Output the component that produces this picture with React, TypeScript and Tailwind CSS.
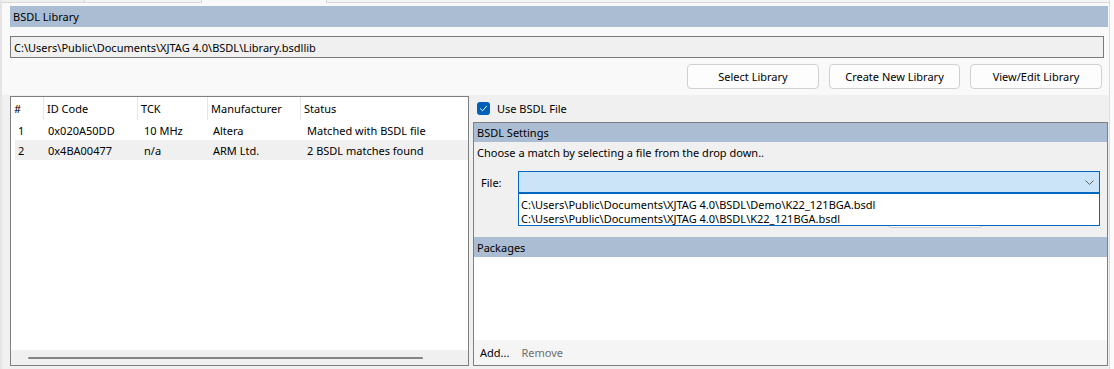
import React from "react";

interface Device {
  index: number;
  idCode: string;
  tck: string;
  manufacturer: string;
  status: string;
}

const devices: Device[] = [
  { index: 1, idCode: "0x020A50DD", tck: "10 MHz", manufacturer: "Altera", status: "Matched with BSDL file" },
  { index: 2, idCode: "0x4BA00477", tck: "n/a", manufacturer: "ARM Ltd.", status: "2 BSDL matches found" },
];

const bsdlFiles = [
  "C:\\Users\\Public\\Documents\\XJTAG 4.0\\BSDL\\Demo\\K22_121BGA.bsdl",
  "C:\\Users\\Public\\Documents\\XJTAG 4.0\\BSDL\\K22_121BGA.bsdl",
];

const Button: React.FC<{ label: string; width: string }> = ({ label, width }) => (
  <button
    className={`${width} h-[25px] rounded-[4px] border border-[#d0d0d0] bg-[#fdfdfd] text-center text-[11px] text-black`}
  >
    {label}
  </button>
);

const App: React.FC = () => {
  return (
    <div className="w-[1114px] h-[369px] overflow-hidden bg-[#fbfbfb] font-['Noto_Sans',sans-serif] text-[11px] leading-none text-black">
      <div className="w-[1111px] h-full flex flex-col border-r border-[#dcdcdc] border-l-[3px] border-l-[#e4e4e4] -ml-[1px]">
        {/* Tab strip remnants */}
        <div className="h-[3px] flex shrink-0">
          <div className="w-[83px] bg-[#f0f0f0] border-r border-b border-[#d9d9d9]" />
          <div className="w-[117px] bg-[#f5f5f5] border-r border-b border-[#d9d9d9]" />
          <div className="w-[125px] bg-[#f9f9f9] border-r border-[#d9d9d9]" />
          <div className="flex-1 bg-[#f5f5f5] border-b border-[#d9d9d9]" />
        </div>

        {/* Library section */}
        <div className="h-[92px] shrink-0 bg-[#f9f9f9] pl-[8px] pt-[3px]">
          <div className="h-[21px] mr-[1px] bg-[#abbdd3] pl-[3px] flex items-center">BSDL Library</div>
          <div className="mt-[9px] h-[22px] mr-[5px] border border-[#7a7a7a] bg-[#f0f0f0] pl-[3px] flex items-center">
            C:\Users\Public\Documents\XJTAG 4.0\BSDL\Library.bsdllib
          </div>
          <div className="mt-[6px] mr-[7px] flex justify-end gap-[10px]">
            <Button label="Select Library" width="w-[132px]" />
            <Button label="Create New Library" width="w-[131px]" />
            <Button label="View/Edit Library" width="w-[132px]" />
          </div>
        </div>

        {/* Devices + BSDL settings */}
        <div className="flex-1 bg-[#f0f0f0] pl-[8px] pt-[1px] flex gap-[4px]">
          {/* Device list */}
          <div className="w-[459px] h-[270px] border border-[#7f7f7f] bg-white flex flex-col">
            <div className="h-[23px] flex">
              <div className="w-[33px] border-r border-[#e5e5e5] pl-[3px] pt-[6px]">#</div>
              <div className="w-[94px] border-r border-[#e5e5e5] pl-[3px] pt-[6px]">ID Code</div>
              <div className="w-[70px] border-r border-[#e5e5e5] pl-[3px] pt-[6px]">TCK</div>
              <div className="w-[93px] border-r border-[#e5e5e5] pl-[3px] pt-[6px]">Manufacturer</div>
              <div className="flex-1 pl-[3px] pt-[6px]">Status</div>
            </div>
            {devices.map((d) => (
              <div
                key={d.index}
                className={`ml-[4px] h-[20px] flex items-center ${d.index === 2 ? "bg-[#f0f0f0]" : ""}`}
              >
                <div className="w-[29px] pl-[3px]">{d.index}</div>
                <div className="w-[94px] pl-[4px]">{d.idCode}</div>
                <div className="w-[70px] pl-[6px]">{d.tck}</div>
                <div className="w-[93px] pl-[5px]">{d.manufacturer}</div>
                <div className="flex-1 pl-[6px]">{d.status}</div>
              </div>
            ))}
            <div className="flex-1" />
            <div className="h-[15px] bg-[#f0f0f0] flex items-center pl-[17px]">
              <div className="w-[395px] h-[2px] rounded-full bg-[#858585]" />
            </div>
          </div>

          {/* BSDL options */}
          <div className="w-[635px] flex flex-col">
            <div className="h-[26px] flex items-center pl-[4px] pb-[1px]">
              <div className="w-[13px] h-[13px] rounded-[3px] bg-[#005fb8] flex items-center justify-center">
                <svg width="9" height="9" viewBox="0 0 9 9" fill="none">
                  <path d="M1.5 4.8 L3.6 6.8 L7.6 2.2" stroke="white" strokeWidth="1" strokeLinecap="round" strokeLinejoin="round" />
                </svg>
              </div>
              <span className="ml-[7px]">Use BSDL File</span>
            </div>

            <div className="h-[244px] border border-[#7f7f7f] flex flex-col">
              <div className="h-[19px] shrink-0 bg-[#abbdd3] pl-[3px] flex items-center">BSDL Settings</div>
              <div className="h-[95px] shrink-0 relative">
                <div className="h-[20px] pl-[3px] flex items-center">
                  Choose a match by selecting a file from the drop down..
                </div>
                <div className="mt-[9px] flex items-center">
                  <span className="w-[44px] pl-[7px]">File:</span>
                  <div className="w-[582px] h-[22px] border border-[#0067c0] bg-[#cce4f7] flex items-center justify-end pr-[5px]">
                    <svg width="9" height="5" viewBox="0 0 9 5" fill="none">
                      <path d="M0.5 0.5 L4.5 4.5 L8.5 0.5" stroke="#5f5f5f" strokeWidth="1" />
                    </svg>
                  </div>
                </div>
                {/* control partly hidden behind the open list */}
                <div className="absolute left-[413px] top-[61px] w-[96px] h-[25px] rounded-[4px] border border-[#d0d0d0] bg-[#fdfdfd]" />
                {/* open drop down list */}
                <div className="absolute left-[44px] top-[51px] w-[582px] h-[33px] border border-[#0067c0] bg-white pt-[3px]">
                  {bsdlFiles.map((f) => (
                    <div key={f} className="h-[14px] pl-[2px] flex items-center">
                      {f}
                    </div>
                  ))}
                </div>
              </div>
              <div className="h-[20px] shrink-0 bg-[#abbdd3] pl-[3px] flex items-center">Packages</div>
              <div className="flex-1 bg-white" />
              <div className="h-[25px] shrink-0 bg-[#f5f5f5] flex items-center pl-[6px] gap-[12px]">
                <span>Add...</span>
                <span className="text-[#6d6d6d]">Remove</span>
              </div>
            </div>
          </div>
        </div>
        <div className="h-[3px] shrink-0 bg-[#f0f0f0]" />
      </div>
    </div>
  );
};

export default App;
